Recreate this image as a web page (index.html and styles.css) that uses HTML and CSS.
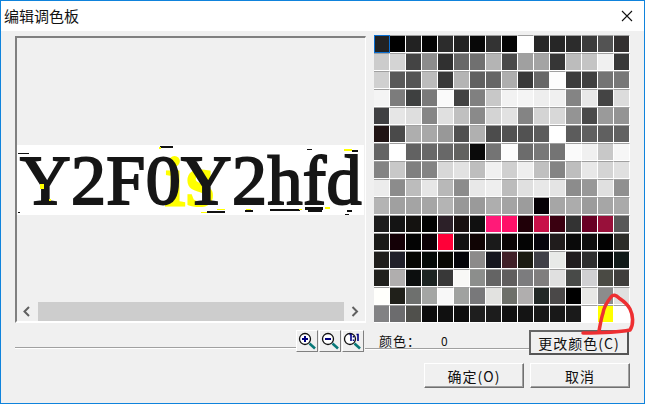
FILE: index.html
```html
<!DOCTYPE html>
<html lang="zh">
<head>
<meta charset="utf-8">
<title>编辑调色板</title>
<link rel="stylesheet" href="styles.css">
</head>
<body>
<div class="window">
  <header class="titlebar">
    <span class="title">编辑调色板</span>
    <svg class="close" width="12" height="12" viewBox="0 0 12 12"><path d="M1 1L11 11M11 1L1 11" stroke="#111" stroke-width="1.1" fill="none"/></svg>
  </header>
  <main class="content">
    <section class="top">
      <div class="frame">
        <div class="pane">
          <div class="captcha">
            <span class="glyph-i">i</span>
            <span class="glyph-s">s</span>
            <span class="word">Y2F0Y2hfd</span>
            <svg class="noise" width="347" height="70" viewBox="0 0 347 70">
              <g fill="#111">
                <rect x="143" y="1" width="13" height="2"/><rect x="1" y="8" width="11" height="1"/>
                <rect x="290" y="4" width="5" height="1"/><rect x="335" y="5" width="6" height="2"/>
                <rect x="190" y="66" width="18" height="2"/><rect x="253" y="64" width="30" height="2"/>
                <rect x="288" y="62" width="18" height="3"/><rect x="291" y="64" width="14" height="3"/>
                <rect x="228" y="65" width="8" height="2"/><rect x="330" y="65" width="5" height="2"/>
                <rect x="328" y="69" width="4" height="1"/><rect x="1" y="67" width="2" height="1"/>
              </g>
              <g fill="#ffff00">
                <rect x="142" y="2" width="2" height="2"/><rect x="327" y="4" width="8" height="2"/>
                <rect x="23" y="39" width="4" height="5"/><rect x="32" y="54" width="2" height="2"/>
                <rect x="184" y="67" width="6" height="1"/><rect x="200" y="64" width="8" height="1"/>
                <rect x="229" y="64" width="5" height="1"/><rect x="308" y="62" width="5" height="2"/>
                <rect x="282" y="64" width="3" height="1"/>
              </g>
            </svg>
          </div>
        </div>
        <div class="scrollbar">
          <svg class="arrow" width="21" height="19" viewBox="0 0 21 19"><path d="M12 5L7.500 9.500L12 14" stroke="#606060" stroke-width="2" fill="none"/></svg>
          <div class="track"></div>
          <svg class="arrow" width="21" height="19" viewBox="0 0 21 19"><path d="M8.500 5L13 9.500L8.500 14" stroke="#606060" stroke-width="2" fill="none"/></svg>
        </div>
      </div>
      <div class="palette" id="palette"></div>
    </section>
    <section class="tools">
      <div class="rule rule-left"></div>
      <div class="zooms">
        <button class="zoom" aria-label="放大"><svg width="20" height="20" viewBox="0 0 20 20"><circle cx="8" cy="8" r="5.500" fill="#fff" stroke="#111" stroke-width="1.300"/><path d="M12.500 12.500L18 17.500" stroke="#087878" stroke-width="2.600"/><path d="M5 8H11M8 5V11" stroke="#000080" stroke-width="2"/></svg></button>
        <button class="zoom" aria-label="缩小"><svg width="20" height="20" viewBox="0 0 20 20"><circle cx="8" cy="8" r="5.500" fill="#fff" stroke="#111" stroke-width="1.300"/><path d="M12.500 12.500L18 17.500" stroke="#087878" stroke-width="2.600"/><path d="M5 8H11" stroke="#000080" stroke-width="2"/></svg></button>
        <button class="zoom" aria-label="1:1"><svg width="20" height="20" viewBox="0 0 20 20"><circle cx="7" cy="8" r="5.500" fill="#fff" stroke="#111" stroke-width="1.300"/><path d="M11.500 12.500L17 17.500" stroke="#087878" stroke-width="2.600"/><path d="M6.500 3.500H8V10M10.500 5V6.500M10.500 8.500V10M13.500 3.500H15V10" stroke="#000080" stroke-width="1.600" fill="none"/></svg></button>
      </div>
      <div class="status">
        <span class="label">颜色：</span>
        <span class="value">0</span>
      </div>
      <button class="btn btn-default">更改颜色(C)</button>
    </section>
    <section class="actions">
      <button class="btn">确定(O)</button>
      <button class="btn">取消</button>
    </section>
  </main>
  <svg class="scribble" width="645" height="404" viewBox="0 0 645 404"><path d="M583 333C597 333 615 333 630 330C634 324 633 315 630 309C627 303 622 300 619 298C616 295 613 294 611 297C607 302 604 307 603 313C601 319 600 326 599 331" fill="none" stroke="#ee2f32" stroke-width="3.500" stroke-linecap="round"/></svg>
</div>
<script src="app.js"></script>
</body>
</html>
```
FILE: styles.css
```css
* { box-sizing: border-box; }
html, body { margin: 0; padding: 0; }
body { width: 645px; height: 404px; overflow: hidden; background: #f0f0f0; font-family: "Noto Sans CJK SC", "Liberation Sans", sans-serif; color: #111; }
.window { position: relative; width: 645px; height: 404px; border: 1px solid #0f83dc; background: #f0f0f0; display: flex; flex-direction: column; }
.titlebar { height: 30px; flex: none; background: #fff; display: flex; align-items: center; justify-content: space-between; padding: 0 10px 0 3px; }
.title { font-size: 15px; line-height: 30px; }
.close { display: block; margin-right: 1px; }
.content { flex: 1; display: flex; flex-direction: column; padding: 4px 14px 0 14px; }
.top { display: flex; align-items: flex-start; gap: 8px; }
.frame { width: 351px; height: 287px; flex: none; border-style: solid; border-width: 2px 1px 2px 2px; border-color: #808080 #fff #fff #808080; display: flex; flex-direction: column; margin-top: 1px; }
.pane { flex: 1; background: #f0f0f0; padding-top: 107px; }
.captcha { position: relative; width: 347px; height: 70px; background: #fff; }
.word { display: block; font-family: "Liberation Serif", serif; font-size: 70px; line-height: 72px; height: 70px; padding-left: 3px; color: #161616; -webkit-text-stroke: 2px #161616; letter-spacing: 0.4px; white-space: nowrap; position: relative; }
.glyph-i, .glyph-s { position: absolute; font-family: "Liberation Serif", serif; color: #ffff00; -webkit-text-stroke: 3px #ffff00; font-size: 72px; line-height: 72px; height: 70px; top: 0; }
.glyph-i { left: 148px; }
.glyph-s { left: 169px; }
.noise { position: absolute; left: 0; top: 0; }
.scrollbar { height: 19px; flex: none; display: flex; align-items: stretch; background: #f0f0f0; }
.arrow { display: block; flex: none; }
.track { flex: 1; background: #cdcdcd; }
.palette { display: grid; grid-template-columns: repeat(16, 16px); grid-auto-rows: 18px; flex: none; }
.cell { border-style: solid; border-width: 1px 1px 1px 0; border-color: #a0a0a0 #fff #fff transparent; }
.cell-selected { border: 1px solid #0a6ed0; }
.tools { display: flex; align-items: flex-end; height: 24px; margin-top: 8px; }
.rule { border-top: 1px solid #a0a0a0; border-bottom: 1px solid #fff; height: 2px; margin-bottom: 6px; }
.rule-left { width: 281px; flex: none; }
.zooms { display: flex; gap: 1px; flex: none; height: 22px; align-self: flex-start; margin-top: -1px; }
.zoom { width: 22px; height: 22px; padding: 0; background: #f0f0f0; border-style: solid; border-width: 1px; border-color: #fff #808080 #808080 #fff; display: flex; align-items: center; justify-content: center; }
.zoom svg { display: block; }
.status { width: 164px; flex: none; height: 100%; margin-left: 1px; display: flex; align-items: center; font-size: 13px; padding: 0 0 6px 14px; background: linear-gradient(#a0a0a0, #a0a0a0) 0 17px / 100% 1px no-repeat, linear-gradient(#fff, #fff) 0 18px / 100% 1px no-repeat; }
.label { width: 62px; flex: none; letter-spacing: 1px; }
.value { font-size: 12px; }
.btn { width: 100px; height: 25px; flex: none; padding: 0; background: #f0f0f0; color: #111; font-family: "Noto Sans CJK SC", "Liberation Sans", sans-serif; font-size: 14px; letter-spacing: 1px; border-style: solid; border-width: 1px; border-color: #fff #707070 #707070 #fff; box-shadow: inset -1px -1px 0 #a0a0a0; }
.btn-default { border: 2px solid #555; border-color: #666 #555 #555 #666; box-shadow: none; }
.actions { display: flex; justify-content: flex-end; gap: 6px; margin-top: 8px; }
.scribble { position: absolute; left: -1px; top: -1px; pointer-events: none; }
```
FILE: app.js
```js
var colours = [
"222","000","222","040404","2c2c2c","222","080808","333","050505","fff","282828","262626","2c2c2c","3c3c3c","535353","333030",
"ccc","d4d4d4","444","8c8c8c","303030","686868","707070","b4b4b4","4a4a4a","a0a0a0","a4a4a4","363636","bcbcbc","c4c4c4","f0f0f0","383838",
"d0d0d0","585858","545454","bcbcbc","383838","b4b4b4","606060","666","aeaeae","383838","686868","fcfcfc","3c3c3c","404040","747474","787878",
"f4f4f4","7c7c7c","3e4040","7a7a7a","fafafa","424242","808080","c8c8c8","f2f2f2","f4f4f4","eee","f0f0f0","848484","e8e8e8","444","dcdcdc",
"404042","e6e6e6","dedede","868686","e0e0e0","c0c0c0","8a8a8a","d4d4d4","e2e2e2","848484","d4d4d4","d8d8d8","949494","4a4a4a","9a9a9a","949494",
"201414","4a4a4a","aeaeae","a8a8a8","989898","505050","b0b0b0","4c4c4c","525252","525252","5c5c5c","fff","5c5c5c","606060","606060","626262",
"646464","fff","626262","686868","686868","626260","0a0a0a","747474","fcfcfc","6c6c6c","787878","747474","fafafa","f0f0f0","c8c8c8","f6f6f6",
"848484","c8c8c8","808080","848484","d8d8d8","e2e2e2","bebebe","f0f0f0","d0d0d0","eee","c0c0c0","848484","bebebe","e8e8e8","d4d4d4","e0e0e0",
"ececec","8c8c8c","bcbcbc","e6e6e6","b8b8b8","8c8c8c","e8e8e8","eee","bcbcbc","e0e0e0","e8e8e8","e4e4e4","8c8c8c","989898","e0e0e0","909090",
"b4b4b4","a0a0a0","a4a4a4","a6a6a6","b4b4b4","989898","9a9a9a","aeaeae","a4a4a4","9c9c9c","050005","a6a6a6","acacac","9c9c9c","a6a6a6","aaa",
"1c1c1c","141414","141210","020202","2c2028","181010","101010","ff1a78","ff1068","200008","c81048","3a0010","333","680024","98103a","585858",
"1a1a18","140006","040404","0c0006","ff0038","121212","100404","1a1a1a","0a0404","040404","06040c","201c1c","0a0a0a","0e0e0e","020202","2c2c28",
"201e1c","20202a","060602","040a06","080802","040408","8c8a8a","16161e","402028","1a1a12","404048","e8eae8","201c1e","2e2e2e","040606","101a18",
"20201c","b0aeae","0c0e0e","1c2422","383838","f8f8f6","8c8e8c","646464","605e5e","7c7c7e","807e7e","e0e0e0","484a48","d0d0d2","4a4a44","403e3c",
"fffffc","20201a","6e706e","a4a6a4","f8f8f8","a0a2a0","78787a","e2e2e0","6e706a","b0aeae","222826","4a4848","000","e8e8e6","8c8c8c","e0e0e0",
"828284","6c6c6e","50504c","0c0c0c","101010","0e0e0e","1e1e1e","1c1c1c","101010","141414","181818","181818","1a1a1a","fff","ffff00","fff"
];
var palette = document.getElementById("palette");
colours.forEach(function (c, i) {
  var cell = document.createElement("div");
  cell.className = i === 0 ? "cell cell-selected" : "cell";
  cell.style.backgroundColor = "#" + c;
  palette.appendChild(cell);
});
```
